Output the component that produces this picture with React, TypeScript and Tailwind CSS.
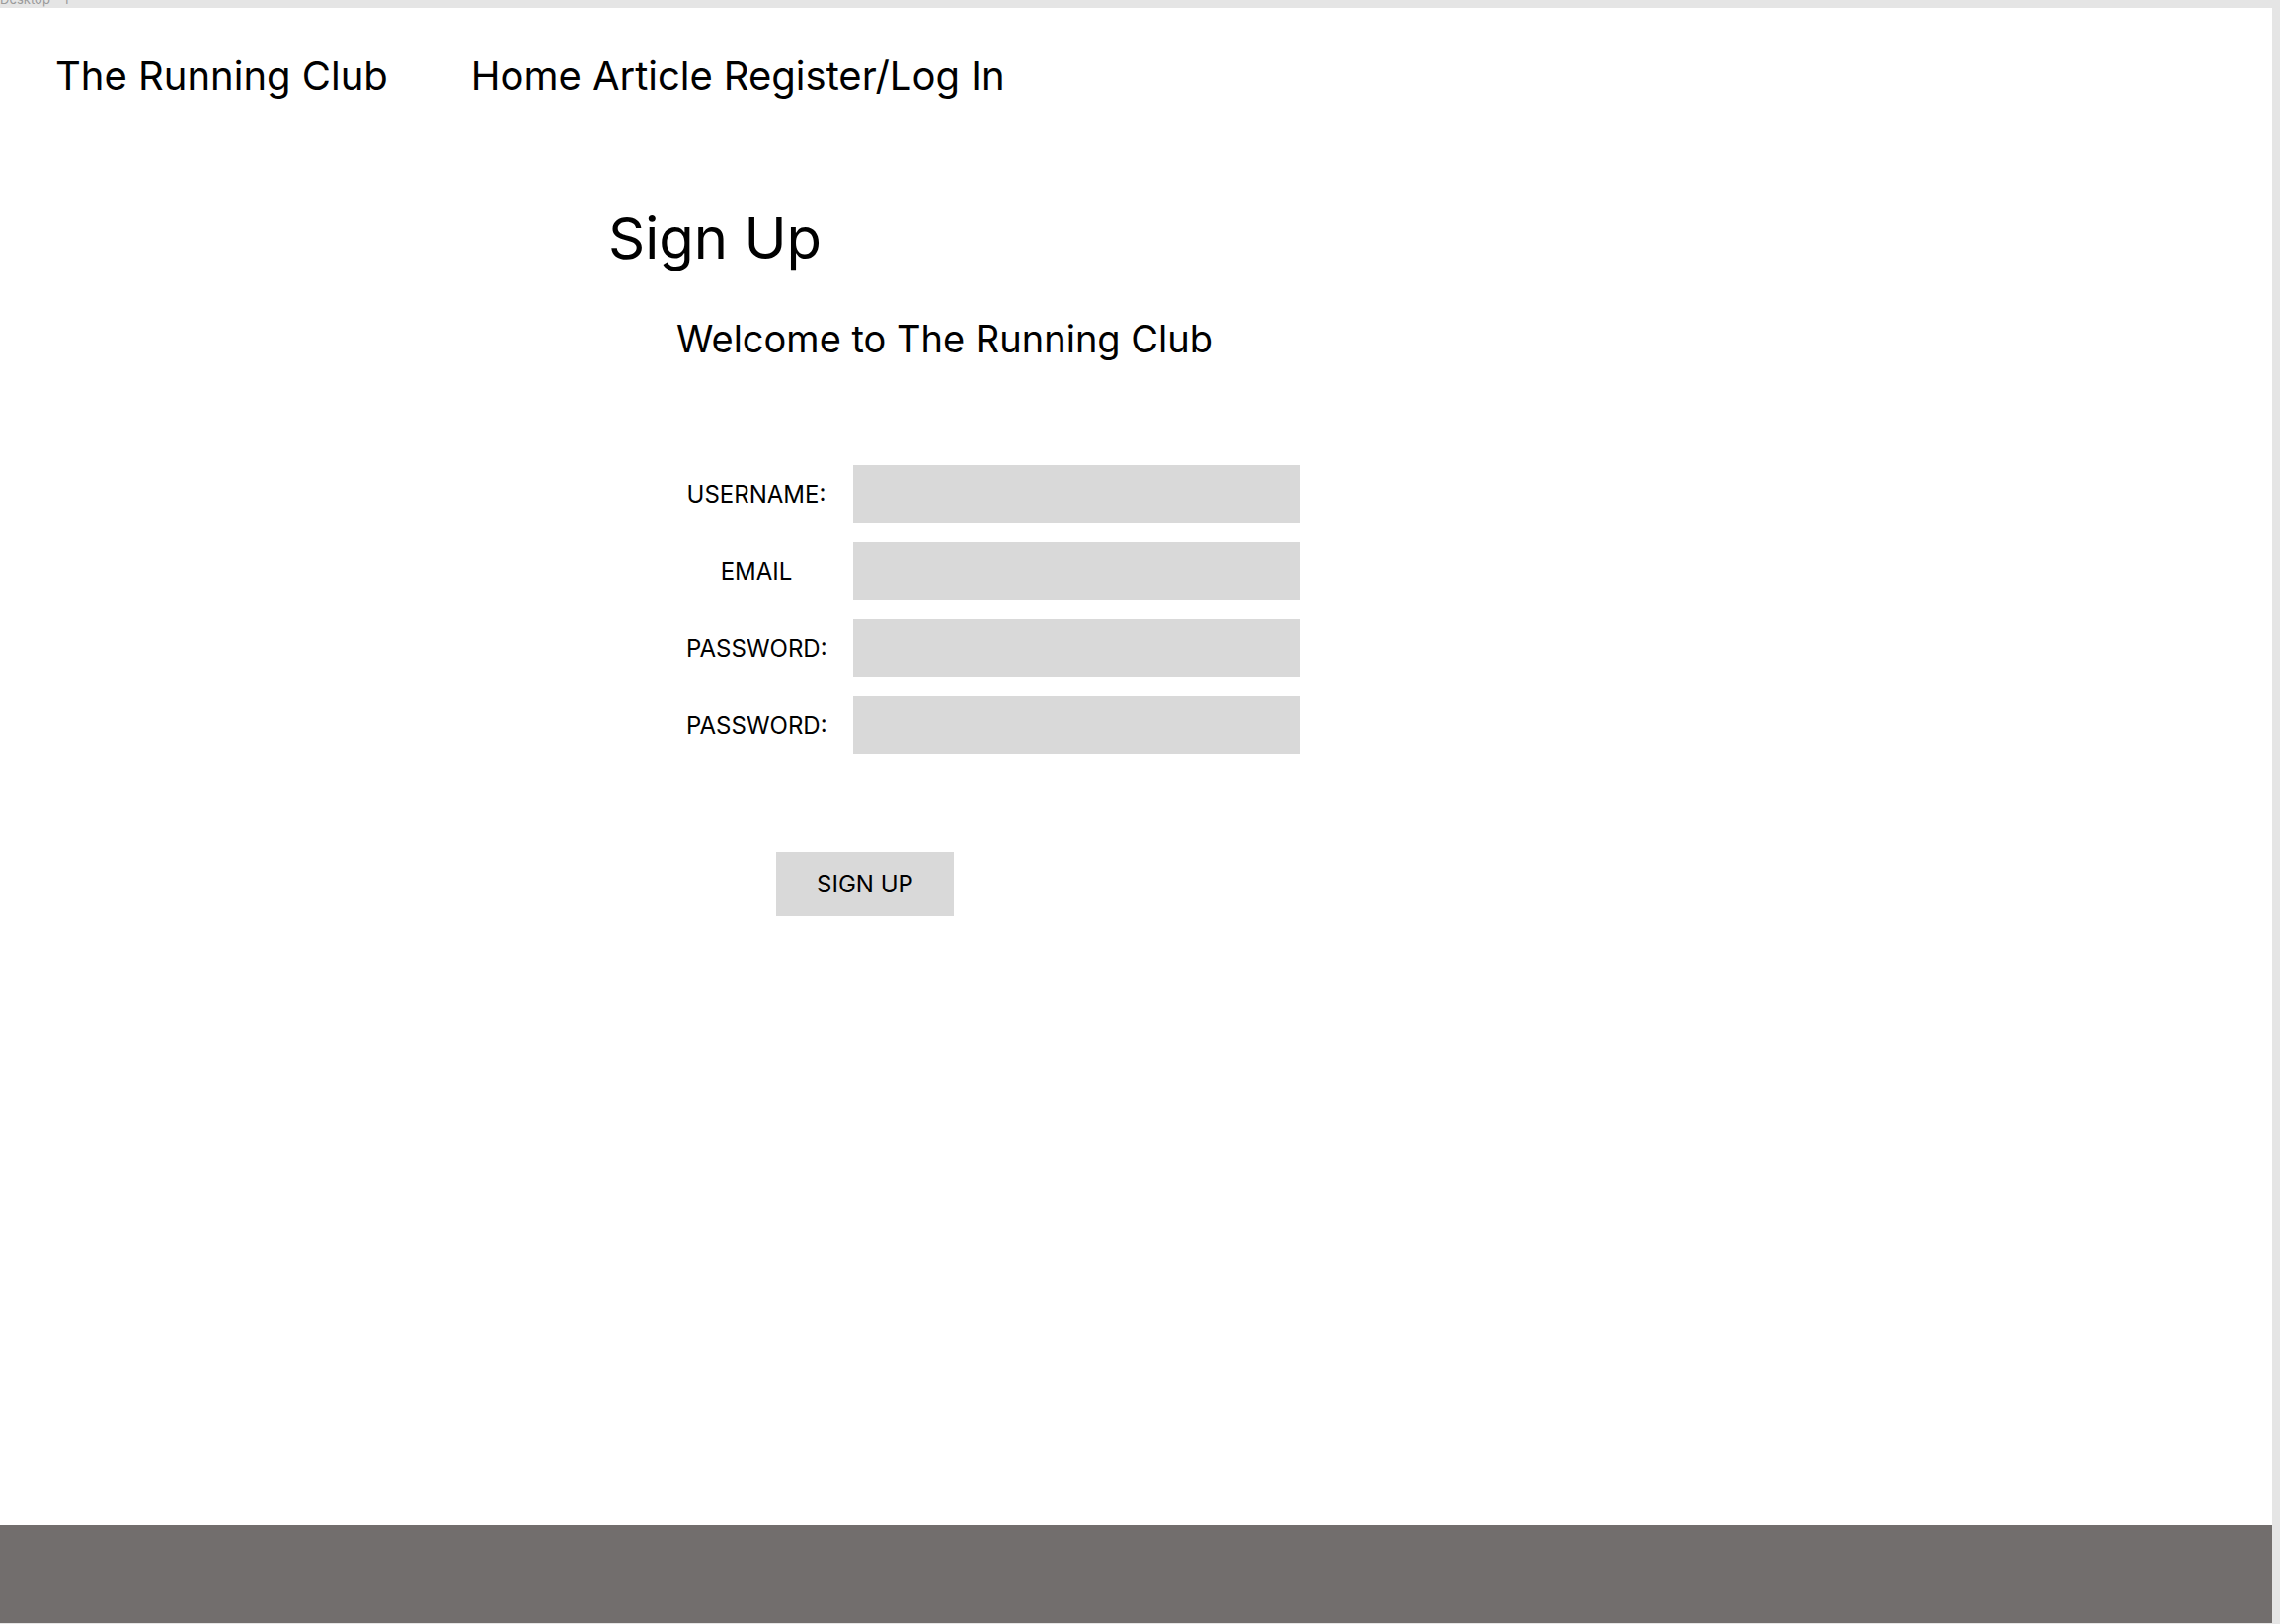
export default function App() {
  const fields = ["USERNAME:", "EMAIL", "PASSWORD:", "PASSWORD:"]

  return (
    <div className="h-[1645px] w-[2309px] bg-[#e5e5e5] font-['Inter','Liberation_Sans',sans-serif] text-black">
      {/* frame label strip */}
      <div className="relative h-[8px] overflow-hidden">
        <span className="absolute left-0 top-[-9px] text-[13px] leading-[16px] text-[#9a9a9a]">Desktop - 1</span>
      </div>

      <div className="flex h-[1636px] w-[2301px] flex-col bg-white">
        <header className="flex items-center pl-[56px] pt-[46px] text-[40px] leading-[46px]">
          <span>The Running Club</span>
          <nav className="ml-[84px] flex gap-[11px]">
            <a href="#">Home</a>
            <a href="#">Article</a>
            <a href="#">Register/Log In</a>
          </nav>
        </header>

        <main className="flex flex-col items-start pl-[616px]">
          <h1 className="mt-[105px] text-[58px] leading-[72px]">Sign Up</h1>
          <p className="ml-[69px] mt-[44px] text-[38px] leading-[44px]">Welcome to The Running Club</p>

          <form className="ml-[79px] mt-[106px] grid grid-cols-[142px_453px] items-center gap-x-[27px] gap-y-[19px]">
            {fields.map((label, i) => (
              <div key={i} className="contents">
                <label className="text-center text-[24px] leading-[30px]">{label}</label>
                <input
                  type={label.startsWith("PASSWORD") ? "password" : "text"}
                  className="h-[59px] w-[453px] bg-[#d9d9d9] outline-none"
                />
              </div>
            ))}
          </form>

          <button
            type="button"
            className="ml-[170px] mt-[99px] h-[65px] w-[180px] bg-[#d9d9d9] text-[24px] leading-[30px]"
          >
            SIGN UP
          </button>
        </main>

        <footer className="mt-auto h-[99px] bg-[#726e6d]" />
      </div>
    </div>
  )
}
